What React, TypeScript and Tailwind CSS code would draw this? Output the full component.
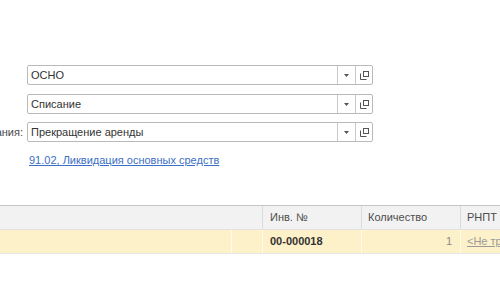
import React from "react";

type FieldRowProperties = {
  readonly label?: string;
  readonly value: string;
};

const OpenIcon = (): JSX.Element => (
  <svg width="9" height="9" viewBox="0 0 9 9" fill="none" stroke="#555" strokeWidth="1">
    <rect x="3.5" y="0.5" width="5" height="5" />
    <path d="M0.5 2.5 V8.5 H6.5" />
  </svg>
);

const FieldRow = ({ label, value }: FieldRowProperties): JSX.Element => (
  <div className="flex items-center h-[20px]">
    <div className="w-[27px] overflow-hidden flex justify-end pr-[4px]">
      {label && <span className="whitespace-nowrap text-[#4a4a4a]">{label}</span>}
    </div>
    <div className="flex w-[346px] h-[20px] border border-[#bababa] rounded-[2px] bg-white">
      <div className="flex-1 flex items-center pl-[3px] text-[#333]">{value}</div>
      <div className="w-[18px] border-l border-[#c8c8c8] flex items-center justify-center">
        <svg width="5" height="3" viewBox="0 0 5 3">
          <path d="M0 0 H5 L2.5 3 Z" fill="#555" />
        </svg>
      </div>
      <div className="w-[17px] border-l border-[#c8c8c8] flex items-center justify-center">
        <OpenIcon />
      </div>
    </div>
  </div>
);

const App = (): JSX.Element => {
  return (
    <div className="w-[500px] h-[300px] bg-white overflow-hidden text-[11px] font-['Liberation_Sans',Arial,sans-serif]">
      <div className="pt-[65px] flex flex-col">
        <FieldRow value="ОСНО" />
        <div className="mt-[9px]">
          <FieldRow value="Списание" />
        </div>
        <div className="mt-[8px]">
          <FieldRow label="Причина списания:" value="Прекращение аренды" />
        </div>
        <div className="mt-[11px] pl-[29px] h-[15px] flex items-center">
          <a className="text-[#3a6fc4] underline cursor-pointer">91.02, Ликвидация основных средств</a>
        </div>
      </div>
      <div className="mt-[37px] border-t border-[#c6c6c6]">
        <div className="grid grid-cols-[263px_99px_99px_1fr] h-[24px] bg-[#f2f2f2] border-b border-[#e2e2e2] text-[#4d4d4d]">
          <div className="border-r border-[#dadada]" />
          <div className="border-r border-[#dadada] flex items-center pl-[7px]">Инв. №</div>
          <div className="border-r border-[#dadada] flex items-center pl-[6px]">Количество</div>
          <div className="flex items-center pl-[6px]">РНПТ</div>
        </div>
        <div className="grid grid-cols-[232px_31px_99px_99px_1fr] h-[24px] bg-[#fdf1c9] border-b border-[#e6e6e6]">
          <div className="border-r border-[#fffaea]" />
          <div className="border-r border-[#fffaea]" />
          <div className="border-r border-[#fffaea] flex items-center pl-[7px] font-bold text-[#333]">00-000018</div>
          <div className="border-r border-[#fffaea] flex items-center justify-end pr-[8px] text-[#8a8a8a]">1</div>
          <div className="flex items-center pl-[6px] text-[#9a9a9a] underline whitespace-nowrap overflow-hidden">&lt;Не требуется&gt;</div>
        </div>
      </div>
    </div>
  );
};

export default App;
